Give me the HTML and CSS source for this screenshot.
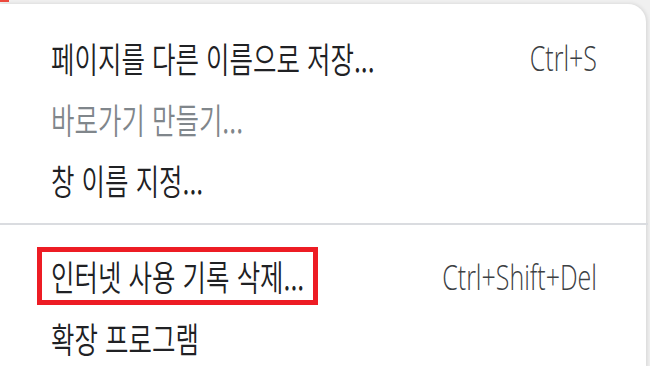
FILE: index.html
```html
<!DOCTYPE html>
<html lang="ko">
<head>
    <meta charset="UTF-8">
    <meta name="viewport" content="width=device-width, initial-scale=1.0">
    <title>메뉴</title>
    <link rel="stylesheet" href="styles.css">
</head>
<body>

<div class="corner-mark"></div>

<!-- Context Menu -->
<div class="menu">
    <div class="menu-item">
        <span class="label">페이지를 다른 이름으로 저장...</span>
        <span class="shortcut">Ctrl+S</span>
    </div>
    <div class="menu-item disabled">
        <span class="label">바로가기 만들기...</span>
    </div>
    <div class="menu-item">
        <span class="label">창 이름 지정...</span>
    </div>

    <div class="separator"></div>

    <div class="menu-item">
        <span class="highlight"><span class="label">인터넷 사용 기록 삭제...</span></span>
        <span class="shortcut">Ctrl+Shift+Del</span>
    </div>
    <div class="menu-item">
        <span class="label">확장 프로그램</span>
    </div>
</div>

</body>
</html>
```

FILE: styles.css
```css
body {
    margin: 0;
    background-color: #f0f0f0;
    font-family: "Noto Sans CJK KR", "Open Sans", sans-serif;
    overflow: hidden;
}

.corner-mark {
    width: 9px;
    height: 2px;
    background-color: #ee4b3f;
}

.menu {
    width: 646px;
    height: 364px;
    margin-top: 2px;
    padding: 22px 49px 0 51px;
    box-sizing: border-box;
    background-color: #fff;
    border-top-right-radius: 18px;
    box-shadow: 1px 0 4px rgba(0, 0, 0, 0.12);
}

.menu-item {
    display: flex;
    justify-content: space-between;
    align-items: center;
    height: 61px;
    color: #202124;
}

.label,
.shortcut {
    display: inline-block;
    font-size: 25.5px;
    font-weight: 350;
    transform: scaleY(1.4);
}

.label {
    transform-origin: left center;
}

.shortcut {
    font-family: "Open Sans", sans-serif;
    font-size: 25px;
    color: #3c4043;
    transform-origin: right center;
}

.disabled {
    color: #80868b;
}

.separator {
    height: 2px;
    margin: 14px -51px 20px -51px;
    background-color: #dadce0;
}

.highlight {
    display: inline-block;
    height: 48px;
    line-height: 48px;
    margin-left: -14px;
    padding: 0 9px;
    border: 5px solid #ed1c24;
}
```
